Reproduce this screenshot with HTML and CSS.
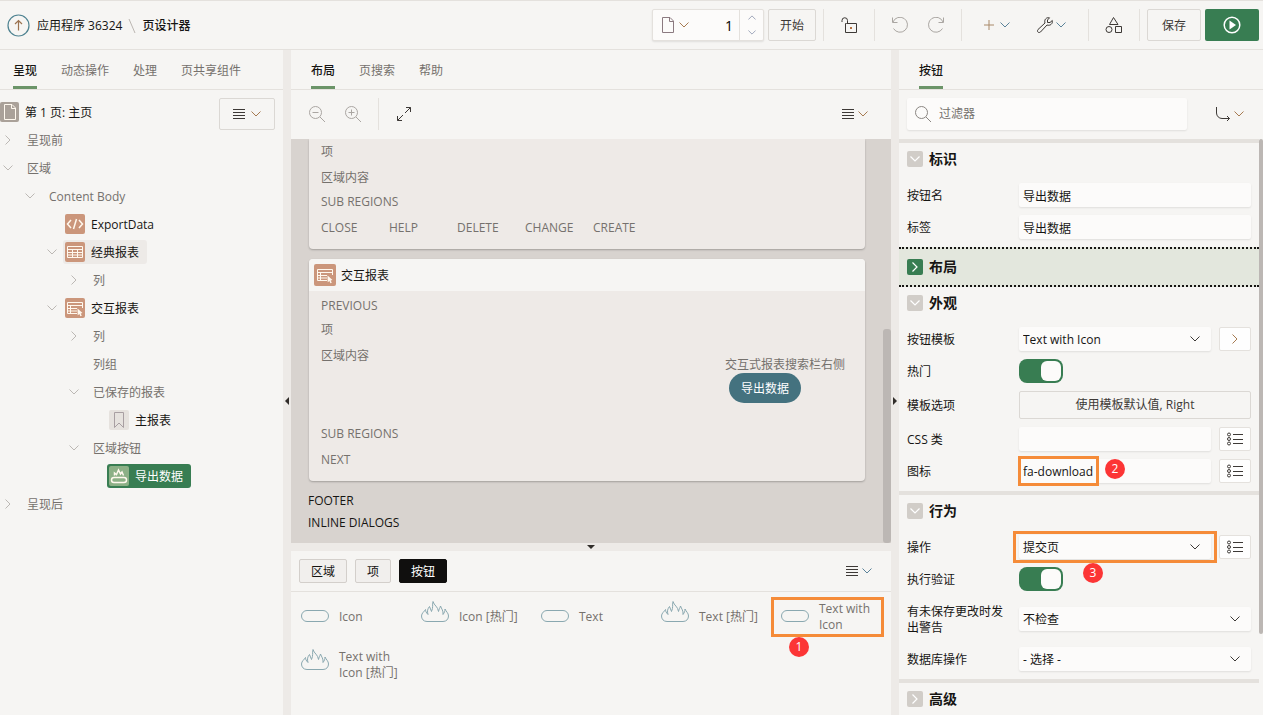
FILE: index.html
```html
<!DOCTYPE html>
<html lang="zh-CN">
<head>
<meta charset="utf-8">
<meta name="viewport" content="width=device-width, initial-scale=1">
<title>页设计器</title>
<link rel="stylesheet" href="styles.css">
</head>
<body>
<svg class="sprite" aria-hidden="true">
  <symbol id="down" viewBox="0 0 10 6"><path d="M.5 .5 5 5 9.500 .5"/></symbol>
  <symbol id="right" viewBox="0 0 6 10"><path d="M.5 .5 5 5 .5 9.500"/></symbol>
  <symbol id="menu" viewBox="0 0 12 12"><path d="M0 1.500H12M0 4.500H12M0 7.500H12M0 10.500H12"/></symbol>
  <symbol id="list" viewBox="0 0 16 14"><path d="M6 2.500H16M6 7.500H16M6 11.500H16"/><circle cx="2" cy="2.500" r="1.500"/><circle cx="2" cy="7" r="1.500"/><circle cx="2" cy="11.500" r="1.500"/></symbol>
  <symbol id="file" viewBox="0 0 12 16"><path d="M.5 .5H8L11.500 4V15.500H.5ZM7.500 .5V4.500H11.500"/></symbol>
  <symbol id="pill" viewBox="0 0 28 22"><rect x=".5" y="9.500" width="27" height="11" rx="5.500"/></symbol>
  <symbol id="flame" viewBox="0 0 28 22"><path d="M6 20.500H22C25.500 20.500 27.500 18 27.500 15C27.500 12 25 10.500 24 8C24 10 23.500 11.500 22 13.500C22.500 9.500 20.500 8 19.500 5C19 7 18 8 17.500 10.500C17 5.500 13 4.500 12 .5C11 4.500 12.500 6 10.500 10.500C10 8.500 9 7.500 8.500 5.500C6.500 8 6 10 7 13.500C5 11.500 4.500 10 4.500 8.500C3.500 10.500 .5 12 .5 15C.5 18 2.500 20.500 6 20.500Z"/></symbol>
  <symbol id="report" viewBox="0 0 20 20"><path d="M2.500 4.500H17.500V15.500H2.500ZM2.500 7.500H17.500M2.500 10.500H17.500M2.500 13H17.500M7.500 7.500V15.500M12.500 7.500V15.500"/></symbol>
  <symbol id="ireport" viewBox="0 0 20 20"><path d="M17.500 10V4.500H2.500V15.500H12M2.500 7.500H17.500M2.500 10.500H12M2.500 13H12M5.500 7.500V15.500"/><path class="solid" d="M12.500 10.500 17.500 15 15.700 15.500 16.800 17.700 15.400 18.200 14.400 16 12.700 17.200Z"/></symbol>
  <symbol id="zoomout" viewBox="0 0 16 16"><circle cx="6.500" cy="6.500" r="6"/><path d="M11 11 16 16M3.500 6.500H9.500"/></symbol>
  <symbol id="zoomin" viewBox="0 0 16 16"><circle cx="6.500" cy="6.500" r="6"/><path d="M11 11 16 16M3.500 6.500H9.500M6.500 3.500V9.500"/></symbol>
</svg>

<div class="app">
  <header class="topbar">
    <a class="up" href="#" aria-label="上一级"><svg width="23" height="23" viewBox="0 0 23 23"><circle class="ring" cx="11.500" cy="11.500" r="10.500"/><path class="arrow" d="M11.500 16.500V6.500M8 10 11.500 6.500 15 10"/></svg></a>
    <nav class="crumbs" aria-label="导航"><a href="#">应用程序 36324</a><svg width="8" height="16" viewBox="0 0 8 16"><path d="M1 1 7 15"/></svg><strong>页设计器</strong></nav>
    <div class="pager">
      <button class="pager-menu" aria-label="页"><svg width="12" height="16"><use href="#file"/></svg><svg class="chev" width="10" height="6"><use href="#down"/></svg></button>
      <input type="text" value="1" aria-label="页号">
      <div class="spin"><button aria-label="下一页"><svg class="flip" width="8" height="5" viewBox="0 0 10 6"><use href="#down"/></svg></button><button aria-label="上一页"><svg width="8" height="5" viewBox="0 0 10 6"><use href="#down"/></svg></button></div>
    </div>
    <button class="btn go">开始</button>
    <div class="tools">
      <button class="tool w50" aria-label="锁定"><svg width="17" height="16" viewBox="0 0 17 16"><path d="M1 5V3.500A2.500 2.500 0 0 1 6.500 3.500V6M5.500 6.500H15.500V15.500H4.500V6.500Z"/><rect class="dot" x="9" y="10" width="2" height="2"/></svg></button>
      <button class="tool w36 dim first" aria-label="撤消"><svg width="16" height="16" viewBox="0 0 16 16"><path d="M.5 .5V5.500H5.500M1 5A7.500 7.500 0 1 1 1.500 11.500"/></svg></button>
      <button class="tool w36 dim last" aria-label="重做"><svg width="16" height="16" viewBox="0 0 16 16"><path d="M15.500 .5V5.500H10.500M15 5A7.500 7.500 0 1 0 14.500 11.500"/></svg></button>
      <button class="tool w56 plus first" aria-label="创建"><svg width="12" height="12" viewBox="0 0 12 12"><path d="M6 1V11M1 6H11"/></svg><svg class="chev blue" width="10" height="6"><use href="#down"/></svg></button>
      <button class="tool w56 last" aria-label="实用程序"><svg width="16" height="16" viewBox="0 0 16 16"><path d="M1 12.500 8 6C7 3 9 0 12.500 .8L10.500 3V5.500H13L15.300 3.500C16 7 13 9 10 8L3.500 15C1.500 16.500-.5 14.500 1 12.500Z"/></svg><svg class="chev blue" width="10" height="6"><use href="#down"/></svg></button>
      <button class="tool w50" aria-label="共享组件"><svg width="18" height="18" viewBox="0 0 18 18"><path d="M8.500 1.500 13 8.500H4.500ZM10.500 10.500H16.500V16.500H10.500Z"/><circle cx="4" cy="13.500" r="3"/></svg></button>
    </div>
    <button class="btn save">保存</button>
    <button class="run" aria-label="运行"><svg width="18" height="18" viewBox="0 0 18 18"><circle cx="9" cy="9" r="7.800"/><path d="M6.500 4.500 13 9 6.500 13.500Z"/></svg></button>
  </header>

  <div class="work">
    <section class="panel left">
      <nav class="tabs narrow"><a class="on" href="#">呈现</a><a href="#">动态操作</a><a href="#">处理</a><a href="#">页共享组件</a></nav>
      <div class="tree-area">
        <ul class="tree">
          <li class="root"><span class="node strong"><i class="ico page"><svg width="12" height="16"><use href="#file"/></svg></i><span>第 1 页: 主页</span></span></li>
          <li class="l1"><i class="tog"><svg width="6" height="10"><use href="#right"/></svg></i><span class="node"><span>呈现前</span></span></li>
          <li class="l1"><i class="tog"><svg width="10" height="6"><use href="#down"/></svg></i><span class="node"><span>区域</span></span></li>
          <li class="l2"><i class="tog"><svg width="10" height="6"><use href="#down"/></svg></i><span class="node"><span>Content Body</span></span></li>
          <li class="l3"><i class="tog"></i><span class="node strong pic"><i class="ico"><svg width="20" height="20" viewBox="0 0 20 20"><path class="bold" d="M6 6 2.500 10 6 14M14 6 17.500 10 14 14M11.500 5 8.500 15"/></svg></i><span>ExportData</span></span></li>
          <li class="l3"><i class="tog"><svg width="10" height="6"><use href="#down"/></svg></i><span class="node strong pic hover"><i class="ico"><svg width="20" height="20"><use href="#report"/></svg></i><span>经典报表</span></span></li>
          <li class="l4"><i class="tog"><svg width="6" height="10"><use href="#right"/></svg></i><span class="node"><span>列</span></span></li>
          <li class="l3"><i class="tog"><svg width="10" height="6"><use href="#down"/></svg></i><span class="node strong pic"><i class="ico"><svg width="20" height="20"><use href="#ireport"/></svg></i><span>交互报表</span></span></li>
          <li class="l4"><i class="tog"><svg width="6" height="10"><use href="#right"/></svg></i><span class="node"><span>列</span></span></li>
          <li class="l4"><i class="tog"></i><span class="node"><span>列组</span></span></li>
          <li class="l4"><i class="tog"><svg width="10" height="6"><use href="#down"/></svg></i><span class="node"><span>已保存的报表</span></span></li>
          <li class="l5"><i class="tog"></i><span class="node strong pic"><i class="ico mark"><svg width="20" height="20" viewBox="0 0 20 20"><path d="M5.500 2.500H14.500V17.500L10 13 5.500 17.500Z"/></svg></i><span>主报表</span></span></li>
          <li class="l4"><i class="tog"><svg width="10" height="6"><use href="#down"/></svg></i><span class="node"><span>区域按钮</span></span></li>
          <li class="l5"><i class="tog"></i><span class="node pic selected"><i class="ico"><svg width="20" height="20" viewBox="0 0 20 20"><rect class="bold" x="2.500" y="11.500" width="15" height="5" rx="2.500"/><path class="bold" d="M5.500 9.500V7L7.500 8.500 9.500 4 11.500 8 13 6 14.500 9.500"/></svg></i><span>导出数据</span></span></li>
          <li class="l1"><i class="tog"><svg width="6" height="10"><use href="#right"/></svg></i><span class="node"><span>呈现后</span></span></li>
        </ul>
        <button class="btn tree-menu" aria-label="菜单"><svg width="12" height="12"><use href="#menu"/></svg><svg class="chev" width="10" height="6"><use href="#down"/></svg></button>
      </div>
    </section>

    <div class="splitter"><svg width="4" height="8" viewBox="0 0 4 8"><path d="M4 0V8L0 4Z"/></svg></div>

    <main class="panel center">
      <nav class="tabs"><a class="on" href="#">布局</a><a href="#">页搜索</a><a href="#">帮助</a></nav>
      <div class="layout-bar">
        <button class="tool w36 dim" aria-label="缩小"><svg width="16" height="16"><use href="#zoomout"/></svg></button>
        <button class="tool w36 dim" aria-label="放大"><svg width="16" height="16"><use href="#zoomin"/></svg></button>
        <button class="tool w50 expand" aria-label="展开"><svg width="14" height="14" viewBox="0 0 14 14"><path d="M9 .5H13.500V5M13.500 .5 8 6M5 13.500H.5V9M.5 13.500 6 8"/></svg></button>
        <button class="tool menu" aria-label="菜单"><svg width="12" height="12"><use href="#menu"/></svg><svg class="chev" width="10" height="6"><use href="#down"/></svg></button>
      </div>
      <div class="canvas">
        <section class="card clipped">
          <div class="card-body">
            <div class="slot gap">项</div>
            <div class="slot">区域内容</div>
            <div class="slot gap">SUB REGIONS</div>
            <div class="slot positions"><span>CLOSE</span><span>HELP</span><span>DELETE</span><span>CHANGE</span><span>CREATE</span></div>
          </div>
        </section>
        <section class="card">
          <h2 class="card-head"><i class="ico big"><svg width="20" height="20"><use href="#ireport"/></svg></i><span>交互报表</span></h2>
          <div class="card-body top">
            <div class="slot">PREVIOUS</div>
            <div class="slot gap">项</div>
            <div class="content-row">
              <div class="slot">区域内容</div>
              <div class="right-slot"><span>交互式报表搜索栏右侧</span><button class="export">导出数据</button></div>
            </div>
            <div class="slot gap">SUB REGIONS</div>
            <div class="slot">NEXT</div>
          </div>
        </section>
        <div class="outer-slots"><div>FOOTER</div><div>INLINE DIALOGS</div></div>
        <div class="thumb"></div>
      </div>
      <div class="h-splitter"><svg width="8" height="4" viewBox="0 0 8 4"><path d="M0 0H8L4 4Z"/></svg></div>
      <section class="gallery">
        <div class="gallery-bar">
          <button class="chip">区域</button><button class="chip">项</button><button class="chip active">按钮</button>
          <button class="tool menu" aria-label="菜单"><svg width="12" height="12"><use href="#menu"/></svg><svg class="chev blue" width="10" height="6"><use href="#down"/></svg></button>
        </div>
        <ul class="items">
          <li><svg width="28" height="22"><use href="#pill"/></svg><span>Icon</span></li>
          <li class="hot"><svg width="28" height="22"><use href="#flame"/></svg><span>Icon [热门]</span></li>
          <li><svg width="28" height="22"><use href="#pill"/></svg><span>Text</span></li>
          <li class="hot"><svg width="28" height="22"><use href="#flame"/></svg><span>Text [热门]</span></li>
          <li class="marked"><svg width="28" height="22"><use href="#pill"/></svg><span>Text with Icon</span><b class="badge b1">1</b></li>
          <li class="hot"><svg width="28" height="22"><use href="#flame"/></svg><span>Text with Icon [热门]</span></li>
        </ul>
      </section>
    </main>

    <div class="splitter"><svg width="4" height="8" viewBox="0 0 4 8"><path d="M0 0V8L4 4Z"/></svg></div>

    <aside class="panel right">
      <nav class="tabs"><a class="on" href="#">按钮</a></nav>
      <div class="filter-bar">
        <label class="search"><svg width="16" height="16" viewBox="0 0 16 16"><circle cx="6.500" cy="6.500" r="6"/><path d="M11 11 16 16"/></svg><input type="text" placeholder="过滤器" aria-label="过滤器"></label>
        <button class="tool goto" aria-label="转到组"><svg width="16" height="16" viewBox="0 0 16 16"><path d="M1.500 1V7C1.500 10 4 12.500 7 12.500H14.500M12 10 14.500 12.500 12 15"/></svg><svg class="chev" width="10" height="6"><use href="#down"/></svg></button>
      </div>
      <div class="props">
        <section class="group">
          <h3><button aria-label="折叠"><svg width="10" height="6"><use href="#down"/></svg></button>标识</h3>
          <div class="field"><label for="f1">按钮名</label><input id="f1" type="text" value="导出数据"></div>
          <div class="field"><label for="f2">标签</label><input id="f2" type="text" value="导出数据"></div>
        </section>
        <section class="group focus">
          <h3><button aria-label="展开"><svg width="6" height="10"><use href="#right"/></svg></button>布局</h3>
        </section>
        <section class="group plain">
          <h3><button aria-label="折叠"><svg width="10" height="6"><use href="#down"/></svg></button>外观</h3>
          <div class="field"><label for="f3">按钮模板</label><div class="pick"><select id="f3"><option>Text with Icon</option></select><svg width="10" height="6"><use href="#down"/></svg></div><button class="side" aria-label="编辑模板"><svg class="chev" width="6" height="10"><use href="#right"/></svg></button></div>
          <div class="field"><label for="f4">热门</label><input id="f4" class="switch" type="checkbox" role="switch" checked></div>
          <div class="field"><label for="f5">模板选项</label><button id="f5" class="wide">使用模板默认值, Right</button></div>
          <div class="field"><label for="f6">CSS 类</label><input id="f6" type="text"><button class="side" aria-label="CSS 类列表"><svg width="16" height="14"><use href="#list"/></svg></button></div>
          <div class="field"><label for="f7">图标</label><div class="hold"><input id="f7" type="text" value="fa-download"><span class="frame f-icon"></span><b class="badge b2">2</b></div><button class="side" aria-label="图标列表"><svg width="16" height="14"><use href="#list"/></svg></button></div>
        </section>
        <section class="group">
          <h3><button aria-label="折叠"><svg width="10" height="6"><use href="#down"/></svg></button>行为</h3>
          <div class="field"><label for="f8">操作</label><div class="pick"><select id="f8"><option>提交页</option></select><svg width="10" height="6"><use href="#down"/></svg><span class="frame f-action"></span><b class="badge b3">3</b></div><button class="side" aria-label="操作列表"><svg width="16" height="14"><use href="#list"/></svg></button></div>
          <div class="field"><label for="f9">执行验证</label><input id="f9" class="switch" type="checkbox" role="switch" checked></div>
          <div class="field"><label for="f10">有未保存更改时发出警告</label><div class="pick"><select id="f10"><option>不检查</option></select><svg width="10" height="6"><use href="#down"/></svg></div></div>
          <div class="field"><label for="f11">数据库操作</label><div class="pick"><select id="f11"><option>- 选择 -</option></select><svg width="10" height="6"><use href="#down"/></svg></div></div>
        </section>
        <section class="group">
          <h3><button aria-label="展开"><svg width="6" height="10"><use href="#right"/></svg></button>高级</h3>
        </section>
        <div class="thumb"></div>
      </div>
    </aside>
  </div>
</div>
</body>
</html>
```
FILE: styles.css
```css
* { box-sizing: border-box; }
body, button, input, select {
  font: 12px/16px "Open Sans", "Noto Sans CJK SC", sans-serif;
}
body { margin: 0; color: #161513; background: #f6f5f3; }
button { padding: 0; border: 0; background: none; color: inherit; }
a { color: inherit; text-decoration: none; }
ul { list-style: none; margin: 0; padding: 0; }
h2, h3 { margin: 0; }
i, b { font-style: normal; }
svg { display: block; flex: none; fill: none; stroke: #3d3936; }
.sprite { position: absolute; width: 0; height: 0; }
.chev { stroke: #a67a50; }
.chev.blue { stroke: #5a8299; }

.app { display: flex; flex-direction: column; height: 100vh; overflow: hidden; }

/* Top bar */
.topbar {
  display: flex; align-items: center; flex: none; height: 50px;
  padding: 0 4px 0 7px; border-top: 1px solid #e4e1dd; border-bottom: 1px solid #e4e1dd;
}
.ring { stroke: #4f8391; stroke-width: 1.2; }
.arrow { stroke: #9c7350; stroke-width: 1.2; }
.crumbs { display: flex; align-items: center; gap: 6px; margin-left: 7px; margin-right: auto; padding-top: 2px; }
.crumbs svg { stroke: #bcb7b2; }
.crumbs strong { font-weight: 500; }
.pager {
  display: flex; height: 32px; background: #fcfbfa; border: 1px solid #e4e1dd;
  border-radius: 2px; box-shadow: 0 1px 2px #00000018;
}
.pager-menu { display: flex; align-items: center; gap: 5px; padding: 0 4px 0 9px; }
.pager-menu svg:first-child { stroke: #8b7a80; }
.pager input { width: 46px; border: 0; padding: 2px 6px 0 0; background: none; font-size: 14px; text-align: right; }
.spin { display: flex; flex-direction: column; width: 24px; border-left: 1px solid #e4e1dd; }
.spin button { display: flex; flex: 1; align-items: center; justify-content: center; }
.spin svg { stroke: #8a94ac; }
.flip { transform: rotate(180deg); }
.btn { height: 32px; padding-top: 2px; border: 1px solid #dbd8d4; border-radius: 2px; color: #3d3936; }
.go { width: 48px; margin: 0 7px 0 4px; }
.save { width: 54px; margin: 0 4px 0 7px; }
.run { display: flex; align-items: center; justify-content: center; width: 54px; height: 32px; background: #387d52; border-radius: 2px; }
.run svg { stroke: #fff; stroke-width: 1.5; }
.run path { fill: #fff; stroke: none; }
.tools { display: flex; border-right: 1px solid #e4e1dd; }
.tool { display: flex; align-items: center; justify-content: center; height: 32px; }
.tool.menu { gap: 4px; margin-left: auto; }
.dim svg { stroke: #aaa6a2; }
.w36 { width: 36px; }
.w50 { width: 51px; border-left: 1px solid #e4e1dd; }
.w56 { width: 56px; gap: 4px; }
.tools .first { border-left: 1px solid #e4e1dd; }
.tools .w36.first { width: 44px; padding-left: 7px; }
.tools .w36.last { width: 43px; padding-right: 7px; }
.tools .w56.first { width: 67px; gap: 5px; padding-left: 3px; }
.tools .w56.last { width: 60px; gap: 3px; padding-right: 13px; }
.plus svg:first-child { stroke: #a98968; }
.dot { fill: #b5713f; stroke: none; }

/* Panels */
.work { display: grid; grid-template-columns: 283px 8px minmax(0, 1fr) 8px 364px; flex: 1; min-height: 0; }
.panel { display: flex; flex-direction: column; min-height: 0; }
.splitter, .h-splitter { display: flex; align-items: center; justify-content: center; background: #edeae7; }
.splitter { padding-top: 36px; }
.splitter svg, .h-splitter svg { fill: #312d2a; stroke: none; }
.tabs { display: flex; flex: none; gap: 24px; height: 40px; padding: 0 20px; border-bottom: 1px solid #e4e1dd; color: #75716d; }
.tabs.narrow { padding: 0 13px; }
.tabs a { line-height: 36px; padding-top: 3px; height: 39px; }
.tabs .on { border-bottom: 3px solid #6b9468; color: #161513; font-weight: 500; }

/* Tree */
.tree-area { position: relative; padding-top: 8px; }
.tree-menu { position: absolute; top: 8px; right: 8px; display: flex; align-items: center; justify-content: center; gap: 6px; width: 56px; padding: 0; }
.tree li { display: flex; align-items: center; height: 28px; color: #75716d; }
.tog { display: flex; justify-content: center; width: 16px; margin-right: 3px; }
.tog svg { stroke: #bcb8b4; }
.l2 { padding-left: 22px; }
.l3 { padding-left: 44px; }
.l4 { padding-left: 66px; }
.l5 { padding-left: 88px; }
.node { display: flex; align-items: center; gap: 6px; height: 24px; padding: 0 8px; border-radius: 3px; }
.node span, .card-head span { padding-top: 2px; }
.root .node { padding: 0; }
.node.strong { color: #161513; }
.node.pic { padding: 0 8px 0 2px; }
.node.hover { background: #edeae7; }
.node.selected { background: #387d52; color: #fff; }
.ico { display: flex; align-items: center; justify-content: center; width: 20px; height: 20px; border-radius: 2px; background: #cb967b; }
.ico svg { stroke: #fff8ee; }
.ico.big { width: 22px; height: 22px; }
.ico.page { background: #aaa199; width: 19px; }
.ico.mark { background: #e6e2de; }
.ico.mark svg { stroke: #a89fa2; }
.selected .ico { background: #8cb086; }
.solid { fill: #fff8ee; stroke: none; }
.bold { stroke-width: 1.5; }

/* Page layout */
.layout-bar { display: flex; align-items: center; flex: none; height: 49px; padding: 0 23px 1px 8px; }
.expand { margin-left: 7px; }
.canvas { position: relative; flex: 1; min-height: 0; overflow: hidden; padding: 0 26px 0 18px; background: #d8d3cf; color: #75716d; }
.card { margin-bottom: 10px; border-radius: 4px; background: #eeeae7; box-shadow: 0 1px 2px #00000040; }
.card.clipped { border-radius: 0 0 4px 4px; }
.card-head { display: flex; align-items: center; gap: 5px; height: 32px; padding-left: 5px; border-radius: 4px 4px 0 0; background: #f6f5f3; color: #161513; font-size: 12px; font-weight: 400; }
.card-body { padding: 1px 12px 9px; }
.card-body.top { padding-top: 3px; }
.slot { line-height: 24px; }
.slot.gap { margin-bottom: 2px; }
.positions { display: grid; grid-template-columns: repeat(5, 68px); }
.content-row { display: flex; justify-content: space-between; padding-bottom: 18px; }
.right-slot { display: flex; flex-direction: column; align-items: flex-start; padding: 13px 8px 0 0; }
.export { height: 30px; margin: 0 4px 1px; padding: 2px 12px 0; border-radius: 15px; background: #44727f; color: #fff; }
.outer-slots { margin-top: -1px; margin-left: -1px; color: #161513; line-height: 22px; }
.thumb { position: absolute; right: 0; bottom: 0; width: 8px; height: 53%; border-radius: 3px; background: #bcb7b4; }
.h-splitter { flex: none; height: 8px; }

/* Component gallery */
.gallery { flex: none; height: 164px; }
.gallery-bar { display: flex; align-items: center; gap: 8px; height: 41px; padding: 0 19px 0 8px; border-bottom: 1px solid #e4e1dd; }
.chip { height: 24px; padding: 1px 11px 0; border: 1px solid #d3cfcb; border-radius: 2px; background: #f1efed; }
.chip.active { border-color: #100f0e; background: #100f0e; color: #fff; }
.items { display: grid; grid-template-columns: repeat(auto-fill, 120px); grid-auto-rows: 48px; padding-top: 1px; color: #75716d; }
.items li { position: relative; display: flex; align-items: center; gap: 10px; padding: 0 8px 0 10px; }
.items svg { stroke: #8aa8b0; margin-bottom: 10px; }
.marked::after { content: ""; position: absolute; inset: 4px 7px 4px 0; border: 3px solid #f58b38; }
.badge { position: absolute; width: 20px; height: 20px; border-radius: 50%; background: #fc3535; color: #fff; font-weight: 400; line-height: 20px; text-align: center; }
.b1 { left: 18px; top: 44px; z-index: 1; }
.b2 { left: 86px; top: 0; }
.b3 { left: 64px; top: 28px; z-index: 1; }

/* Property editor */
.filter-bar { display: flex; align-items: center; justify-content: space-between; flex: none; height: 49px; padding: 0 19px 1px 8px; }
.search { display: flex; align-items: center; gap: 8px; width: 280px; height: 32px; padding: 0 8px; border-radius: 2px; background: #fcfbfa; box-shadow: 0 1px 2px #00000018; }
.search svg { stroke: #8a8682; }
.search input { flex: 1; min-width: 0; padding: 0; border: 0; background: none; }
.search input::placeholder { color: #75716d; }
.goto { gap: 3px; }
.props { position: relative; flex: 1; min-height: 0; overflow: hidden; padding-right: 4px; }
.props > .thumb { top: 0; bottom: auto; width: 4px; height: 86%; }
.group { border-top: 4px solid #e4e1dd; padding: 0 8px 4px; }
.group.plain { border-top: 0; }
.group.focus { padding: 0 8px; border: dotted #161513; border-width: 2px 0; background: #e3e7dd; }
.group h3 { display: flex; align-items: center; gap: 6px; height: 32px; margin-bottom: 4px; font-size: 14px; font-weight: 700; }
.group.focus h3 { height: 36px; margin: 0; }
.group h3 button { display: flex; align-items: center; justify-content: center; width: 16px; height: 16px; border-radius: 2px; background: #d1cdc8; }
.group.focus h3 button { background: #387d52; }
.group h3 svg { stroke: #fff; stroke-width: 1.2; }
.field { display: flex; align-items: center; gap: 8px; }
.field label { flex: none; width: 104px; padding: 9px 4px 7px 0; }
.field input:not(.switch), .field select { flex: 1; min-width: 0; width: 100%; height: 24px; padding: 1px 4px 0; border: 0; border-radius: 2px; background: #fcfbfa; color: #161513; box-shadow: 0 1px 2px #00000018; }
.field select { appearance: none; }
.pick, .hold { position: relative; display: flex; flex: 1; min-width: 0; }
.pick > svg { position: absolute; right: 11px; top: 9px; }
.side { display: flex; align-items: center; justify-content: center; width: 32px; height: 24px; border: 1px solid #e4e1dd; border-radius: 2px; background: #fefefe; }
.wide { flex: 1; height: 28px; margin: 4px 0; border: 1px solid #dbd8d4; border-radius: 2px; color: #3d3936; }
.switch { appearance: none; width: 44px; height: 24px; margin: 0; padding: 2px; border-radius: 8px; background: #387d52; }
.switch::before { content: ""; display: block; width: 20px; height: 20px; margin-left: 20px; border-radius: 6px; background: #fcfbfa; }
.frame { position: absolute; border: 3px solid #f58b38; pointer-events: none; }
.f-icon { left: -1px; top: -3px; width: 81px; height: 30px; }
.f-action { inset: -4px -6px; }
```
